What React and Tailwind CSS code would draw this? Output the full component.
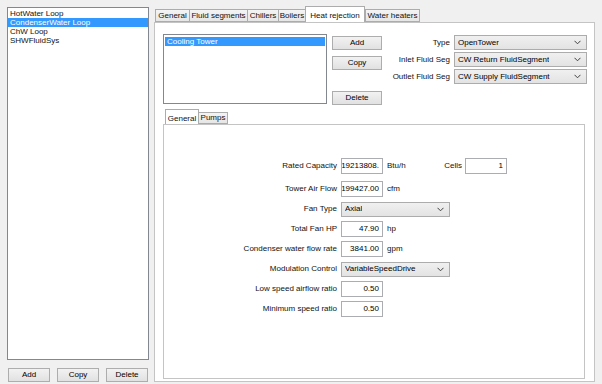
import React from 'react';

const font = { fontFamily: '"Liberation Sans", Arial, sans-serif' };

const Chevron = () => (
    <svg width="7" height="5" viewBox="0 0 7 5" className="shrink-0">
        <path d="M0.5 0.8 L3.5 3.8 L6.5 0.8" fill="none" stroke="#404040" strokeWidth="1" />
    </svg>
);

const Btn = ({ children, className = '' }) => (
    <div className={`h-[14px] flex items-center justify-center border border-[#adadad] bg-gradient-to-b from-[#f2f2f2] to-[#e1e1e1] text-[8px] text-black ${className}`}>
        {children}
    </div>
);

const Combo = ({ value, className = '' }) => (
    <div className={`h-[15px] flex items-center justify-between pl-[3px] pr-[5px] border border-[#acacac] bg-gradient-to-b from-[#f0f0f0] to-[#e3e3e3] text-[8px] text-black ${className}`}>
        <span className="truncate">{value}</span>
        <Chevron />
    </div>
);

const NumBox = ({ value, className = 'w-[42px]' }) => (
    <div className={`h-[16px] flex items-center justify-end px-[3px] border border-[#abadb3] bg-white text-[8px] text-black overflow-hidden whitespace-nowrap ${className}`}>
        {value}
    </div>
);

const Tab = ({ label, active, className = '' }) =>
    active ? (
        <div className={`h-[16px] -mb-px relative z-10 flex items-start pt-[3px] justify-center border border-b-0 border-[#acacac] bg-white text-[8px] ${className}`}>
            {label}
        </div>
    ) : (
        <div className={`h-[13px] mt-[3px] flex items-center justify-center border border-[#acacac] bg-gradient-to-b from-[#f4f4f4] to-[#e6e6e6] text-[8px] -ml-px first:ml-0 ${className}`}>
            {label}
        </div>
    );

const Row = ({ label, children, className = '' }) => (
    <div className={`h-[20px] flex items-center ${className}`}>
        <div className="w-[177px] text-right pr-[4px] text-[8px] text-[#111] whitespace-nowrap">{label}</div>
        {children}
    </div>
);

export default function App() {
    const loops = ['HotWater Loop', 'CondenserWater Loop', 'ChW Loop', 'SHWFluidSys'];

    return (
        <div className="w-[602px] h-[384px] bg-[#f0f0f0] flex text-[#111] overflow-hidden" style={font}>
            {/* left: plant loop list */}
            <div className="w-[154px] shrink-0 pl-[7px] pt-[7px] flex flex-col">
                <div className="w-[142px] h-[353px] border border-[#828790] bg-white pt-[1px]">
                    {loops.map((l, i) => (
                        <div
                            key={l}
                            className={`h-[9px] leading-[9px] pl-[2px] text-[8px] ${i === 1 ? 'bg-[#3399ff] text-white' : 'text-[#111]'}`}
                        >
                            {l}
                        </div>
                    ))}
                </div>
                <div className="mt-[8px] flex gap-[7px] pl-[1px]">
                    <Btn className="w-[42px]">Add</Btn>
                    <Btn className="w-[42px]">Copy</Btn>
                    <Btn className="w-[42px]">Delete</Btn>
                </div>
            </div>

            {/* right: tabbed editor */}
            <div className="flex flex-col pt-[6px]">
                <div className="flex items-start pl-[1px] h-[16px]">
                    <Tab label="General" className="w-[35px]" />
                    <Tab label="Fluid segments" className="w-[59px]" />
                    <Tab label="Chillers" className="w-[32px]" />
                    <Tab label="Boilers" className="w-[28px]" />
                    <Tab label="Heat rejection" active className="w-[60px] -ml-[1px]" />
                    <Tab label="Water heaters" className="w-[55px] ml-0" />
                </div>
                <div className="w-[441px] h-[360px] border border-[#c4c4c4] bg-white pl-[8px] pt-[11px]">
                    {/* top section */}
                    <div className="flex">
                        <div className="w-[164px] h-[70px] border border-[#828790] bg-white pt-[2px] px-[1px]">
                            <div className="h-[9px] leading-[9px] pl-[2px] text-[8px] bg-[#3399ff] text-white">Cooling Tower</div>
                        </div>
                        <div className="ml-[5px] pt-[2px] flex flex-col w-[50px]">
                            <Btn>Add</Btn>
                            <Btn className="mt-[6px]">Copy</Btn>
                            <Btn className="mt-[21px]">Delete</Btn>
                        </div>
                        <div className="ml-[4px] pt-[1px] flex flex-col gap-[2px]">
                            {[
                                ['Type', 'OpenTower'],
                                ['Inlet Fluid Seg', 'CW Return FluidSegment'],
                                ['Outlet Fluid Seg', 'CW Supply FluidSegment'],
                            ].map(([l, v]) => (
                                <div key={l} className="flex items-center h-[15px]">
                                    <div className="w-[68px] text-right pr-[4px] text-[8px] whitespace-nowrap">{l}</div>
                                    <Combo value={v} className="w-[133px]" />
                                </div>
                            ))}
                        </div>
                    </div>

                    {/* sub tabs */}
                    <div className="mt-[4px] flex flex-col">
                        <div className="flex items-start h-[15px] pl-[2px]">
                            <div className="w-[34px] h-[15px] -mb-px relative z-10 flex items-start pt-[3px] justify-center border border-b-0 border-[#acacac] bg-white text-[8px]">
                                General
                            </div>
                            <div className="w-[29px] h-[12px] mt-[3px] flex items-center justify-center border border-l-0 border-[#acacac] bg-gradient-to-b from-[#f4f4f4] to-[#e6e6e6] text-[8px]">
                                Pumps
                            </div>
                        </div>
                        <div className="w-[422px] h-[255px] border border-[#c4c4c4] bg-white pt-[31px]">
                            <Row label="Rated Capacity">
                                <NumBox value="19213808." />
                                <span className="ml-[4px] text-[8px] w-[54px]">Btu/h</span>
                                <span className="text-[8px] w-[24px] text-right pr-[3px]">Cells</span>
                                <NumBox value="1" />
                            </Row>
                            <Row label="Tower Air Flow" className="mt-[3px]">
                                <NumBox value="199427.00" />
                                <span className="ml-[4px] text-[8px]">cfm</span>
                            </Row>
                            <Row label="Fan Type">
                                <Combo value="Axial" className="w-[109px] h-[14px]" />
                            </Row>
                            <Row label="Total Fan HP">
                                <NumBox value="47.90" />
                                <span className="ml-[4px] text-[8px]">hp</span>
                            </Row>
                            <Row label="Condenser water flow rate">
                                <NumBox value="3841.00" />
                                <span className="ml-[4px] text-[8px]">gpm</span>
                            </Row>
                            <Row label="Modulation Control">
                                <Combo value="VariableSpeedDrive" className="w-[109px] h-[14px]" />
                            </Row>
                            <Row label="Low speed airflow ratio">
                                <NumBox value="0.50" />
                            </Row>
                            <Row label="Minimum speed ratio">
                                <NumBox value="0.50" />
                            </Row>
                        </div>
                    </div>
                </div>
            </div>
        </div>
    );
}
